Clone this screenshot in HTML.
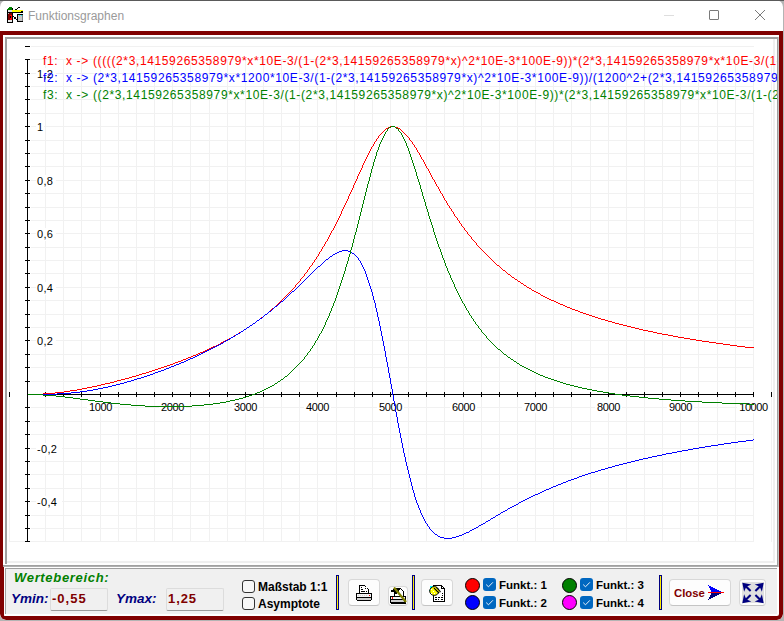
<!DOCTYPE html>
<html><head><meta charset="utf-8">
<style>
*{margin:0;padding:0;box-sizing:border-box}
html,body{width:784px;height:621px;overflow:hidden;background:#b4b4b4;font-family:"Liberation Sans",sans-serif}
.abs{position:absolute}
#win{position:absolute;left:0;top:0;width:783px;height:620px;background:#fff;border-radius:7px 7px 6px 6px;overflow:hidden}
#topline{position:absolute;left:0;top:0;width:784px;height:1px;background:#5a5a5a}
#title{position:absolute;left:28px;top:8px;font-size:12px;line-height:16px;color:#9a9a9a;white-space:pre}
#frame{position:absolute;left:0;top:31px;width:783px;height:589px;border-style:solid;border-color:#800000;border-width:4px 4px 4px 3px;border-radius:0 0 6px 6px}
.g{position:absolute}
.yl{position:absolute;left:36px;height:13px;padding-left:1px;background:#fff;font-size:11px;line-height:13px;color:#000;white-space:pre;letter-spacing:0.3px}
.xl{position:absolute;top:398px;height:15px;padding-top:2px;background:#fff;text-align:center;font-size:11px;line-height:14px;color:#000;letter-spacing:-0.4px;white-space:pre}
.fl{position:absolute;font-size:12px;line-height:16px;white-space:pre;letter-spacing:0.62px}
#clip{position:absolute;left:7px;top:39px;width:770px;height:80px;overflow:hidden}
.pn{position:absolute;white-space:pre}
.cb{position:absolute;width:13px;height:13px;border:1px solid #333;border-radius:3px;background:#f7f7f7}
.cbc{position:absolute;width:13px;height:13px;border-radius:3px;background:#0067c0}
.circ{position:absolute;width:15px;height:15px;border-radius:50%;border:1px solid #000}
.sep{position:absolute;top:575px;width:3px;height:35px;background:#ffee00;border:1px solid #000080}
.btn{position:absolute;background:#fdfdfd;border:1px solid #d8d8d8;border-bottom-color:#c4c4c4;border-radius:4px}
.ed{position:absolute;background:#f0f0f0;border:1px solid #dcdcdc;border-bottom:1px solid #9a9a9a;border-radius:2px}
</style></head><body>
<div id="win">
  <!-- title bar -->
  <svg class="abs" style="left:7px;top:7px" width="16" height="16" viewBox="0 0 16 16" shape-rendering="crispEdges"><rect x="2" y="0" width="3" height="1" fill="#008000"/><rect x="1" y="1" width="4" height="1" fill="#008000"/><rect x="0" y="2" width="5" height="1" fill="#008000"/><rect x="5" y="1" width="1" height="2" fill="#000"/><rect x="0" y="3" width="1" height="2" fill="#000"/><rect x="1" y="3" width="4" height="2" fill="#e0e0e0"/><rect x="5" y="3" width="11" height="2" fill="#ffff00"/><rect x="14" y="4" width="2" height="1" fill="#000"/><rect x="6" y="5" width="10" height="1" fill="#000"/><rect x="8" y="2" width="2" height="1" fill="#000"/><rect x="10" y="1" width="1" height="1" fill="#000"/><rect x="11" y="0" width="2" height="1" fill="#000"/><rect x="0" y="5" width="6" height="11" fill="#000"/><rect x="1" y="6" width="4" height="7" fill="#800000"/><rect x="3" y="8" width="2" height="5" fill="#ff0000"/><rect x="3" y="9" width="1" height="2" fill="#000"/><rect x="1" y="13" width="4" height="2" fill="#e8e8e8"/><rect x="1" y="6" width="1" height="1" fill="#c0c0c0"/><rect x="6" y="9" width="1" height="1" fill="#000"/><rect x="7" y="10" width="2" height="2" fill="#000"/><rect x="9" y="12" width="1" height="1" fill="#000"/><rect x="10" y="7" width="6" height="8" fill="#000"/><rect x="11" y="8" width="4" height="6" fill="#c8c8c8"/><rect x="12" y="8" width="1" height="1" fill="#00ffff"/><rect x="14" y="8" width="1" height="1" fill="#00ffff"/><rect x="15" y="8" width="1" height="6" fill="#808080"/></svg>
  <div id="title">Funktionsgraphen</div>
  <div class="abs" style="left:664px;top:15px;width:10px;height:1px;background:#dedede"></div>
  <div class="abs" style="left:709px;top:10px;width:10px;height:10px;border:1px solid #7a7a7a;border-radius:1px"></div>
  <svg class="abs" style="left:754px;top:9px" width="12" height="12" viewBox="0 0 12 12"><path d="M1 1L11 11M11 1L1 11" stroke="#7a7a7a" stroke-width="1"/></svg>

  <div id="frame"></div>

  <!-- chart panel borders -->
  <div class="abs" style="left:5px;top:37px;width:774px;height:2px;background:#a0a0a0"></div>
  <div class="abs" style="left:5px;top:37px;width:2px;height:527px;background:#a0a0a0"></div>
  <div class="abs" style="left:777px;top:37px;width:1px;height:530px;background:#a0a0a0"></div>
  <div class="abs" style="left:778px;top:37px;width:1px;height:530px;background:#c4c4c4"></div>
  <div class="abs" style="left:3px;top:565px;width:775px;height:1px;background:#a0a0a0"></div>
  <div class="abs" style="left:3px;top:566px;width:775px;height:1px;background:#b0b0b0"></div>
  <div class="abs" style="left:3px;top:567px;width:1px;height:50px;background:#800000"></div>
  <div class="abs" style="left:773px;top:39px;width:2px;height:524px;background:#efefef"></div>
  <div class="abs" style="left:7px;top:561px;width:768px;height:2px;background:#efefef"></div>

  <svg class="chart" width="784" height="621" viewBox="0 0 784 621" shape-rendering="crispEdges" style="position:absolute;left:0;top:0"><path d="M9.5 59V542M27.5 59V542M45.5 59V542M63.5 59V542M81.5 59V542M100.5 59V542M118.5 59V542M136.5 59V542M154.5 59V542M172.5 59V542M190.5 59V542M209.5 59V542M227.5 59V542M245.5 59V542M263.5 59V542M281.5 59V542M299.5 59V542M317.5 59V542M336.5 59V542M354.5 59V542M372.5 59V542M390.5 59V542M408.5 59V542M426.5 59V542M444.5 59V542M463.5 59V542M481.5 59V542M499.5 59V542M517.5 59V542M535.5 59V542M553.5 59V542M571.5 59V542M590.5 59V542M608.5 59V542M626.5 59V542M644.5 59V542M662.5 59V542M680.5 59V542M698.5 59V542M717.5 59V542M735.5 59V542M753.5 59V542M771.5 59V542M9 541.5H754M31 528.5H754M31 515.5H754M31 501.5H754M31 488.5H754M31 474.5H754M31 461.5H754M31 448.5H754M31 434.5H754M31 421.5H754M31 407.5H754M31 394.5H754M31 381.5H754M31 367.5H754M31 354.5H754M31 340.5H754M31 327.5H754M31 314.5H754M31 300.5H754M31 287.5H754M31 273.5H754M31 260.5H754M31 247.5H754M31 233.5H754M31 220.5H754M31 207.5H754M31 193.5H754M31 180.5H754M31 166.5H754M31 153.5H754M31 140.5H754M31 126.5H754M31 113.5H754M31 99.5H754M31 86.5H754M31 73.5H754M31 59.5H754M31 46.5H754" stroke="#f1f1f1" stroke-width="1" fill="none"/><path d="M27.5 59V542M27 394.5H754M25 541.5H30M25 528.5H30M25 515.5H30M25 501.5H30M25 488.5H30M25 474.5H30M25 461.5H30M25 448.5H30M25 434.5H30M25 421.5H30M25 407.5H30M25 381.5H30M25 367.5H30M25 354.5H30M25 340.5H30M25 327.5H30M25 314.5H30M25 300.5H30M25 287.5H30M25 273.5H30M25 260.5H30M25 247.5H30M25 233.5H30M25 220.5H30M25 207.5H30M25 193.5H30M25 180.5H30M25 166.5H30M25 153.5H30M25 140.5H30M25 126.5H30M25 113.5H30M25 99.5H30M25 86.5H30M25 73.5H30M25 59.5H30M25 46.5H30M45.5 392V397M63.5 392V397M81.5 392V397M100.5 392V397M118.5 392V397M136.5 392V397M154.5 392V397M172.5 392V397M190.5 392V397M209.5 392V397M227.5 392V397M245.5 392V397M263.5 392V397M281.5 392V397M299.5 392V397M317.5 392V397M336.5 392V397M354.5 392V397M372.5 392V397M390.5 392V397M408.5 392V397M426.5 392V397M444.5 392V397M463.5 392V397M481.5 392V397M499.5 392V397M517.5 392V397M535.5 392V397M553.5 392V397M571.5 392V397M590.5 392V397M608.5 392V397M626.5 392V397M644.5 392V397M662.5 392V397M680.5 392V397M698.5 392V397M717.5 392V397M735.5 392V397M753.5 392V397M771.5 392V397M9.5 392V397" stroke="#000" stroke-width="1" fill="none"/></svg>
  <div class="yl" style="top:67.5px;width:20px">1,2</div><div class="yl" style="top:120.5px;width:8px">1</div><div class="yl" style="top:174.5px;width:20px">0,8</div><div class="yl" style="top:227.5px;width:20px">0,6</div><div class="yl" style="top:281.5px;width:20px">0,4</div><div class="yl" style="top:334.5px;width:20px">0,2</div><div class="yl" style="top:442.5px;width:26px">-0,2</div><div class="yl" style="top:495.5px;width:26px">-0,4</div>
  <div class="xl" style="left:87.0px;width:27.0px">1000</div><div class="xl" style="left:159.0px;width:27.0px">2000</div><div class="xl" style="left:232.0px;width:27.0px">3000</div><div class="xl" style="left:304.0px;width:27.0px">4000</div><div class="xl" style="left:377.0px;width:27.0px">5000</div><div class="xl" style="left:450.0px;width:27.0px">6000</div><div class="xl" style="left:522.0px;width:27.0px">7000</div><div class="xl" style="left:595.0px;width:27.0px">8000</div><div class="xl" style="left:667.0px;width:27.0px">9000</div><div class="xl" style="left:737.1px;width:32.8px">10000</div>
  <svg width="784" height="621" viewBox="0 0 784 621" shape-rendering="crispEdges" style="position:absolute;left:0;top:0"><path d="M28 394h15v1h-15z" fill="#008000"/><path d="M43 393h1v1h-1zM44 393h1v1h-1zM45 393h1v1h-1zM46 393h1v1h-1zM47 393h1v1h-1zM48 393h1v1h-1zM49 393h1v1h-1zM50 393h1v1h-1zM51 393h1v1h-1zM52 393h1v1h-1zM53 393h1v1h-1zM54 393h1v1h-1zM55 392h1v1h-1zM56 392h1v1h-1zM57 392h1v1h-1zM58 392h1v1h-1zM59 392h1v1h-1zM60 392h1v1h-1zM61 392h1v1h-1zM62 392h1v1h-1zM63 392h1v1h-1zM64 391h1v1h-1zM65 391h1v1h-1zM66 391h1v1h-1zM67 391h1v1h-1zM68 391h1v1h-1zM69 391h1v1h-1zM70 390h1v1h-1zM71 390h1v1h-1zM72 390h1v1h-1zM73 390h1v1h-1zM74 390h1v1h-1zM75 390h1v1h-1zM76 390h1v1h-1zM77 389h1v1h-1zM78 389h1v1h-1zM79 389h1v1h-1zM80 389h1v1h-1zM81 389h1v1h-1zM82 388h1v1h-1zM83 388h1v1h-1zM84 388h1v1h-1zM85 388h1v1h-1zM86 388h1v1h-1zM87 387h1v1h-1zM88 387h1v1h-1zM89 387h1v1h-1zM90 387h1v1h-1zM91 387h1v1h-1zM92 386h1v1h-1zM93 386h1v1h-1zM94 386h1v1h-1zM95 386h1v1h-1zM96 386h1v1h-1zM97 385h1v1h-1zM98 385h1v1h-1zM99 385h1v1h-1zM100 385h1v1h-1zM101 384h1v1h-1zM102 384h1v1h-1zM103 384h1v1h-1zM104 384h1v1h-1zM105 383h1v1h-1zM106 383h1v1h-1zM107 383h1v1h-1zM108 383h1v1h-1zM109 383h1v1h-1zM110 382h1v1h-1zM111 382h1v1h-1zM112 382h1v1h-1zM113 382h1v1h-1zM114 381h1v1h-1zM115 381h1v1h-1zM116 381h1v1h-1zM117 380h1v1h-1zM118 380h1v1h-1zM119 380h1v1h-1zM120 380h1v1h-1zM121 379h1v1h-1zM122 379h1v1h-1zM123 379h1v1h-1zM124 379h1v1h-1zM125 378h1v1h-1zM126 378h1v1h-1zM127 378h1v1h-1zM128 378h1v1h-1zM129 377h1v1h-1zM130 377h1v1h-1zM131 377h1v1h-1zM132 376h1v1h-1zM133 376h1v1h-1zM134 376h1v1h-1zM135 376h1v1h-1zM136 375h1v1h-1zM137 375h1v1h-1zM138 375h1v1h-1zM139 374h1v1h-1zM140 374h1v1h-1zM141 374h1v1h-1zM142 373h1v1h-1zM143 373h1v1h-1zM144 373h1v1h-1zM145 373h1v1h-1zM146 372h1v1h-1zM147 372h1v1h-1zM148 372h1v1h-1zM149 371h1v1h-1zM150 371h1v1h-1zM151 371h1v1h-1zM152 370h1v1h-1zM153 370h1v1h-1zM154 370h1v1h-1zM155 369h1v1h-1zM156 369h1v1h-1zM157 369h1v1h-1zM158 368h1v1h-1zM159 368h1v1h-1zM160 368h1v1h-1zM161 367h1v1h-1zM162 367h1v1h-1zM163 367h1v1h-1zM164 366h1v1h-1zM165 366h1v1h-1zM166 366h1v1h-1zM167 365h1v1h-1zM168 365h1v1h-1zM169 365h1v1h-1zM170 364h1v1h-1zM171 364h1v1h-1zM172 364h1v1h-1zM173 363h1v1h-1zM174 363h1v1h-1zM175 362h1v1h-1zM176 362h1v1h-1zM177 362h1v1h-1zM178 361h1v1h-1zM179 361h1v1h-1zM180 361h1v1h-1zM181 360h1v1h-1zM182 360h1v1h-1zM183 359h1v1h-1zM184 359h1v1h-1zM185 359h1v1h-1zM186 358h1v1h-1zM187 358h1v1h-1zM188 357h1v1h-1zM189 357h1v1h-1zM190 357h1v1h-1zM191 356h1v1h-1zM192 356h1v1h-1zM193 355h1v1h-1zM194 355h1v1h-1zM195 355h1v1h-1zM196 354h1v1h-1zM197 354h1v1h-1zM198 353h1v1h-1zM199 353h1v1h-1zM200 352h1v1h-1zM201 352h1v1h-1zM202 352h1v1h-1zM203 351h1v1h-1zM204 351h1v1h-1zM205 350h1v1h-1zM206 350h1v1h-1zM207 349h1v1h-1zM208 349h1v1h-1zM209 348h1v1h-1zM210 348h1v1h-1zM211 347h1v1h-1zM212 347h1v1h-1zM213 346h1v1h-1zM214 346h1v1h-1zM215 346h1v1h-1zM216 345h1v1h-1zM217 345h1v1h-1zM218 344h1v1h-1zM219 344h1v1h-1zM220 343h1v1h-1zM221 342h1v1h-1zM222 342h1v1h-1zM223 341h1v1h-1zM224 341h1v1h-1zM225 340h1v1h-1zM226 340h1v1h-1zM227 339h1v1h-1zM228 339h1v1h-1zM229 338h1v1h-1zM230 338h1v1h-1zM231 337h1v1h-1zM232 337h1v1h-1zM233 336h1v1h-1zM234 335h1v1h-1zM235 335h1v1h-1zM236 334h1v1h-1zM237 334h1v1h-1zM238 333h1v1h-1zM239 332h1v1h-1zM240 332h1v1h-1zM241 331h1v1h-1zM242 331h1v1h-1zM243 330h1v1h-1zM244 329h1v1h-1zM245 329h1v1h-1zM246 328h1v1h-1zM247 327h1v1h-1zM248 327h1v1h-1zM249 326h1v1h-1zM250 325h1v1h-1zM251 325h1v1h-1zM252 324h1v1h-1zM253 323h1v1h-1zM254 323h1v1h-1zM255 322h1v1h-1zM256 321h1v1h-1zM257 320h1v1h-1zM258 320h1v1h-1zM259 319h1v1h-1zM260 318h1v1h-1zM261 317h1v1h-1zM262 317h1v1h-1zM263 316h1v1h-1zM264 315h1v1h-1zM265 314h1v1h-1zM266 314h1v1h-1zM267 313h1v1h-1zM268 312h1v1h-1zM269 311h1v1h-1zM270 310h1v1h-1zM271 309h1v1h-1zM272 308h1v1h-1zM273 308h1v1h-1zM274 307h1v1h-1zM275 306h1v1h-1zM276 305h1v1h-1zM277 304h1v1h-1zM278 303h1v1h-1zM279 302h1v1h-1zM280 301h1v1h-1zM281 300h1v1h-1zM282 299h1v1h-1zM283 298h1v1h-1zM284 297h1v1h-1zM285 296h1v1h-1zM286 295h1v1h-1zM287 294h1v1h-1zM288 293h1v1h-1zM289 292h1v1h-1zM290 291h1v1h-1zM291 290h1v1h-1zM292 289h1v1h-1zM293 288h1v1h-1zM294 287h1v1h-1zM295 285h1v2h-1zM296 284h1v1h-1zM297 283h1v1h-1zM298 282h1v1h-1zM299 281h1v1h-1zM300 279h1v2h-1zM301 278h1v1h-1zM302 277h1v1h-1zM303 276h1v1h-1zM304 274h1v2h-1zM305 273h1v1h-1zM306 272h1v1h-1zM307 270h1v2h-1zM308 269h1v1h-1zM309 267h1v2h-1zM310 266h1v1h-1zM311 265h1v1h-1zM312 263h1v2h-1zM313 262h1v1h-1zM314 260h1v2h-1zM315 259h1v1h-1zM316 257h1v2h-1zM317 256h1v1h-1zM318 254h1v2h-1zM319 252h1v2h-1zM320 251h1v1h-1zM321 249h1v2h-1zM322 247h1v2h-1zM323 246h1v1h-1zM324 244h1v2h-1zM325 242h1v2h-1zM326 241h1v1h-1zM327 239h1v2h-1zM328 237h1v2h-1zM329 235h1v2h-1zM330 233h1v2h-1zM331 231h1v2h-1zM332 230h1v1h-1zM333 228h1v2h-1zM334 226h1v2h-1zM335 224h1v2h-1zM336 222h1v2h-1zM337 220h1v2h-1zM338 218h1v2h-1zM339 216h1v2h-1zM340 214h1v2h-1zM341 211h1v3h-1zM342 209h1v2h-1zM343 207h1v2h-1zM344 205h1v2h-1zM345 203h1v2h-1zM346 201h1v2h-1zM347 199h1v2h-1zM348 196h1v3h-1zM349 194h1v2h-1zM350 192h1v2h-1zM351 190h1v2h-1zM352 188h1v2h-1zM353 185h1v3h-1zM354 183h1v2h-1zM355 181h1v2h-1zM356 179h1v2h-1zM357 176h1v3h-1zM358 174h1v2h-1zM359 172h1v2h-1zM360 170h1v2h-1zM361 168h1v2h-1zM362 165h1v3h-1zM363 163h1v2h-1zM364 161h1v2h-1zM365 159h1v2h-1zM366 157h1v2h-1zM367 155h1v2h-1zM368 153h1v2h-1zM369 151h1v2h-1zM370 149h1v2h-1zM371 147h1v2h-1zM372 146h1v1h-1zM373 144h1v2h-1zM374 142h1v2h-1zM375 141h1v1h-1zM376 139h1v2h-1zM377 138h1v1h-1zM378 136h1v2h-1zM379 135h1v1h-1zM380 134h1v1h-1zM381 133h1v1h-1zM382 132h1v1h-1zM383 131h1v1h-1zM384 130h1v1h-1zM385 129h1v1h-1zM386 128h1v1h-1zM387 128h1v1h-1zM388 127h1v1h-1zM389 127h1v1h-1zM390 126h1v1h-1zM391 126h1v1h-1zM392 126h1v1h-1zM393 126h1v1h-1zM394 126h1v1h-1zM395 127h1v1h-1zM396 127h1v1h-1zM397 127h1v1h-1zM398 128h1v1h-1zM399 128h1v1h-1zM400 129h1v1h-1zM401 130h1v1h-1zM402 131h1v1h-1zM403 132h1v1h-1zM404 133h1v1h-1zM405 134h1v1h-1zM406 135h1v1h-1zM407 136h1v1h-1zM408 137h1v1h-1zM409 138h1v2h-1zM410 140h1v1h-1zM411 141h1v1h-1zM412 142h1v2h-1zM413 144h1v1h-1zM414 145h1v2h-1zM415 147h1v1h-1zM416 148h1v2h-1zM417 150h1v2h-1zM418 152h1v1h-1zM419 153h1v2h-1zM420 155h1v2h-1zM421 157h1v2h-1zM422 159h1v1h-1zM423 160h1v2h-1zM424 162h1v2h-1zM425 164h1v2h-1zM426 166h1v2h-1zM427 168h1v1h-1zM428 169h1v2h-1zM429 171h1v2h-1zM430 173h1v2h-1zM431 175h1v2h-1zM432 177h1v2h-1zM433 179h1v1h-1zM434 180h1v2h-1zM435 182h1v2h-1zM436 184h1v2h-1zM437 186h1v1h-1zM438 187h1v2h-1zM439 189h1v2h-1zM440 191h1v2h-1zM441 193h1v1h-1zM442 194h1v2h-1zM443 196h1v2h-1zM444 198h1v2h-1zM445 200h1v1h-1zM446 201h1v2h-1zM447 203h1v2h-1zM448 205h1v1h-1zM449 206h1v2h-1zM450 208h1v1h-1zM451 209h1v2h-1zM452 211h1v1h-1zM453 212h1v2h-1zM454 214h1v2h-1zM455 216h1v1h-1zM456 217h1v1h-1zM457 218h1v2h-1zM458 220h1v1h-1zM459 221h1v2h-1zM460 223h1v1h-1zM461 224h1v2h-1zM462 226h1v1h-1zM463 227h1v1h-1zM464 228h1v2h-1zM465 230h1v1h-1zM466 231h1v1h-1zM467 232h1v2h-1zM468 234h1v1h-1zM469 235h1v1h-1zM470 236h1v1h-1zM471 237h1v2h-1zM472 239h1v1h-1zM473 240h1v1h-1zM474 241h1v1h-1zM475 242h1v1h-1zM476 243h1v2h-1zM477 245h1v1h-1zM478 246h1v1h-1zM479 247h1v1h-1zM480 248h1v1h-1zM481 249h1v1h-1zM482 250h1v1h-1zM483 251h1v1h-1zM484 252h1v1h-1zM485 253h1v1h-1zM486 254h1v1h-1zM487 255h1v1h-1zM488 256h1v1h-1zM489 257h1v1h-1zM490 258h1v1h-1zM491 259h1v1h-1zM492 260h1v1h-1zM493 261h1v1h-1zM494 262h1v1h-1zM495 263h1v1h-1zM496 264h1v1h-1zM497 265h1v1h-1zM498 265h1v1h-1zM499 266h1v1h-1zM500 267h1v1h-1zM501 268h1v1h-1zM502 269h1v1h-1zM503 270h1v1h-1zM504 270h1v1h-1zM505 271h1v1h-1zM506 272h1v1h-1zM507 273h1v1h-1zM508 274h1v1h-1zM509 274h1v1h-1zM510 275h1v1h-1zM511 276h1v1h-1zM512 277h1v1h-1zM513 277h1v1h-1zM514 278h1v1h-1zM515 279h1v1h-1zM516 279h1v1h-1zM517 280h1v1h-1zM518 281h1v1h-1zM519 281h1v1h-1zM520 282h1v1h-1zM521 283h1v1h-1zM522 283h1v1h-1zM523 284h1v1h-1zM524 285h1v1h-1zM525 285h1v1h-1zM526 286h1v1h-1zM527 287h1v1h-1zM528 287h1v1h-1zM529 288h1v1h-1zM530 288h1v1h-1zM531 289h1v1h-1zM532 290h1v1h-1zM533 290h1v1h-1zM534 291h1v1h-1zM535 291h1v1h-1zM536 292h1v1h-1zM537 292h1v1h-1zM538 293h1v1h-1zM539 293h1v1h-1zM540 294h1v1h-1zM541 295h1v1h-1zM542 295h1v1h-1zM543 296h1v1h-1zM544 296h1v1h-1zM545 297h1v1h-1zM546 297h1v1h-1zM547 298h1v1h-1zM548 298h1v1h-1zM549 299h1v1h-1zM550 299h1v1h-1zM551 300h1v1h-1zM552 300h1v1h-1zM553 300h1v1h-1zM554 301h1v1h-1zM555 301h1v1h-1zM556 302h1v1h-1zM557 302h1v1h-1zM558 303h1v1h-1zM559 303h1v1h-1zM560 304h1v1h-1zM561 304h1v1h-1zM562 304h1v1h-1zM563 305h1v1h-1zM564 305h1v1h-1zM565 306h1v1h-1zM566 306h1v1h-1zM567 307h1v1h-1zM568 307h1v1h-1zM569 307h1v1h-1zM570 308h1v1h-1zM571 308h1v1h-1zM572 309h1v1h-1zM573 309h1v1h-1zM574 309h1v1h-1zM575 310h1v1h-1zM576 310h1v1h-1zM577 310h1v1h-1zM578 311h1v1h-1zM579 311h1v1h-1zM580 312h1v1h-1zM581 312h1v1h-1zM582 312h1v1h-1zM583 313h1v1h-1zM584 313h1v1h-1zM585 313h1v1h-1zM586 314h1v1h-1zM587 314h1v1h-1zM588 314h1v1h-1zM589 315h1v1h-1zM590 315h1v1h-1zM591 315h1v1h-1zM592 316h1v1h-1zM593 316h1v1h-1zM594 316h1v1h-1zM595 317h1v1h-1zM596 317h1v1h-1zM597 317h1v1h-1zM598 318h1v1h-1zM599 318h1v1h-1zM600 318h1v1h-1zM601 319h1v1h-1zM602 319h1v1h-1zM603 319h1v1h-1zM604 319h1v1h-1zM605 320h1v1h-1zM606 320h1v1h-1zM607 320h1v1h-1zM608 321h1v1h-1zM609 321h1v1h-1zM610 321h1v1h-1zM611 321h1v1h-1zM612 322h1v1h-1zM613 322h1v1h-1zM614 322h1v1h-1zM615 323h1v1h-1zM616 323h1v1h-1zM617 323h1v1h-1zM618 323h1v1h-1zM619 324h1v1h-1zM620 324h1v1h-1zM621 324h1v1h-1zM622 324h1v1h-1zM623 325h1v1h-1zM624 325h1v1h-1zM625 325h1v1h-1zM626 325h1v1h-1zM627 326h1v1h-1zM628 326h1v1h-1zM629 326h1v1h-1zM630 326h1v1h-1zM631 327h1v1h-1zM632 327h1v1h-1zM633 327h1v1h-1zM634 327h1v1h-1zM635 328h1v1h-1zM636 328h1v1h-1zM637 328h1v1h-1zM638 328h1v1h-1zM639 329h1v1h-1zM640 329h1v1h-1zM641 329h1v1h-1zM642 329h1v1h-1zM643 330h1v1h-1zM644 330h1v1h-1zM645 330h1v1h-1zM646 330h1v1h-1zM647 330h1v1h-1zM648 331h1v1h-1zM649 331h1v1h-1zM650 331h1v1h-1zM651 331h1v1h-1zM652 331h1v1h-1zM653 332h1v1h-1zM654 332h1v1h-1zM655 332h1v1h-1zM656 332h1v1h-1zM657 333h1v1h-1zM658 333h1v1h-1zM659 333h1v1h-1zM660 333h1v1h-1zM661 333h1v1h-1zM662 334h1v1h-1zM663 334h1v1h-1zM664 334h1v1h-1zM665 334h1v1h-1zM666 334h1v1h-1zM667 334h1v1h-1zM668 335h1v1h-1zM669 335h1v1h-1zM670 335h1v1h-1zM671 335h1v1h-1zM672 335h1v1h-1zM673 336h1v1h-1zM674 336h1v1h-1zM675 336h1v1h-1zM676 336h1v1h-1zM677 336h1v1h-1zM678 337h1v1h-1zM679 337h1v1h-1zM680 337h1v1h-1zM681 337h1v1h-1zM682 337h1v1h-1zM683 337h1v1h-1zM684 338h1v1h-1zM685 338h1v1h-1zM686 338h1v1h-1zM687 338h1v1h-1zM688 338h1v1h-1zM689 338h1v1h-1zM690 339h1v1h-1zM691 339h1v1h-1zM692 339h1v1h-1zM693 339h1v1h-1zM694 339h1v1h-1zM695 339h1v1h-1zM696 340h1v1h-1zM697 340h1v1h-1zM698 340h1v1h-1zM699 340h1v1h-1zM700 340h1v1h-1zM701 340h1v1h-1zM702 341h1v1h-1zM703 341h1v1h-1zM704 341h1v1h-1zM705 341h1v1h-1zM706 341h1v1h-1zM707 341h1v1h-1zM708 341h1v1h-1zM709 342h1v1h-1zM710 342h1v1h-1zM711 342h1v1h-1zM712 342h1v1h-1zM713 342h1v1h-1zM714 342h1v1h-1zM715 342h1v1h-1zM716 343h1v1h-1zM717 343h1v1h-1zM718 343h1v1h-1zM719 343h1v1h-1zM720 343h1v1h-1zM721 343h1v1h-1zM722 343h1v1h-1zM723 344h1v1h-1zM724 344h1v1h-1zM725 344h1v1h-1zM726 344h1v1h-1zM727 344h1v1h-1zM728 344h1v1h-1zM729 344h1v1h-1zM730 345h1v1h-1zM731 345h1v1h-1zM732 345h1v1h-1zM733 345h1v1h-1zM734 345h1v1h-1zM735 345h1v1h-1zM736 345h1v1h-1zM737 346h1v1h-1zM738 346h1v1h-1zM739 346h1v1h-1zM740 346h1v1h-1zM741 346h1v1h-1zM742 346h1v1h-1zM743 346h1v1h-1zM744 346h1v1h-1zM745 347h1v1h-1zM746 347h1v1h-1zM747 347h1v1h-1zM748 347h1v1h-1zM749 347h1v1h-1zM750 347h1v1h-1zM751 347h1v1h-1zM752 347h1v1h-1zM753 347h1v1h-1z" fill="#ff0000"/><path d="M43 394h1v1h-1zM44 394h1v1h-1zM45 394h1v1h-1zM46 394h1v1h-1zM47 394h1v1h-1zM48 394h1v1h-1zM49 394h1v1h-1zM50 394h1v1h-1zM51 394h1v1h-1zM52 394h1v1h-1zM53 394h1v1h-1zM54 394h1v1h-1zM55 394h1v1h-1zM56 394h1v1h-1zM57 393h1v1h-1zM58 393h1v1h-1zM59 393h1v1h-1zM60 393h1v1h-1zM61 393h1v1h-1zM62 393h1v1h-1zM63 393h1v1h-1zM64 393h1v1h-1zM65 393h1v1h-1zM66 393h1v1h-1zM67 393h1v1h-1zM68 393h1v1h-1zM69 393h1v1h-1zM70 393h1v1h-1zM71 392h1v1h-1zM72 392h1v1h-1zM73 392h1v1h-1zM74 392h1v1h-1zM75 392h1v1h-1zM76 392h1v1h-1zM77 392h1v1h-1zM78 392h1v1h-1zM79 392h1v1h-1zM80 391h1v1h-1zM81 391h1v1h-1zM82 391h1v1h-1zM83 391h1v1h-1zM84 391h1v1h-1zM85 391h1v1h-1zM86 391h1v1h-1zM87 390h1v1h-1zM88 390h1v1h-1zM89 390h1v1h-1zM90 390h1v1h-1zM91 390h1v1h-1zM92 390h1v1h-1zM93 389h1v1h-1zM94 389h1v1h-1zM95 389h1v1h-1zM96 389h1v1h-1zM97 389h1v1h-1zM98 388h1v1h-1zM99 388h1v1h-1zM100 388h1v1h-1zM101 388h1v1h-1zM102 388h1v1h-1zM103 387h1v1h-1zM104 387h1v1h-1zM105 387h1v1h-1zM106 387h1v1h-1zM107 387h1v1h-1zM108 386h1v1h-1zM109 386h1v1h-1zM110 386h1v1h-1zM111 386h1v1h-1zM112 385h1v1h-1zM113 385h1v1h-1zM114 385h1v1h-1zM115 385h1v1h-1zM116 384h1v1h-1zM117 384h1v1h-1zM118 384h1v1h-1zM119 384h1v1h-1zM120 383h1v1h-1zM121 383h1v1h-1zM122 383h1v1h-1zM123 383h1v1h-1zM124 382h1v1h-1zM125 382h1v1h-1zM126 382h1v1h-1zM127 381h1v1h-1zM128 381h1v1h-1zM129 381h1v1h-1zM130 381h1v1h-1zM131 380h1v1h-1zM132 380h1v1h-1zM133 380h1v1h-1zM134 379h1v1h-1zM135 379h1v1h-1zM136 379h1v1h-1zM137 378h1v1h-1zM138 378h1v1h-1zM139 378h1v1h-1zM140 378h1v1h-1zM141 377h1v1h-1zM142 377h1v1h-1zM143 377h1v1h-1zM144 376h1v1h-1zM145 376h1v1h-1zM146 376h1v1h-1zM147 375h1v1h-1zM148 375h1v1h-1zM149 375h1v1h-1zM150 374h1v1h-1zM151 374h1v1h-1zM152 374h1v1h-1zM153 373h1v1h-1zM154 373h1v1h-1zM155 372h1v1h-1zM156 372h1v1h-1zM157 372h1v1h-1zM158 371h1v1h-1zM159 371h1v1h-1zM160 371h1v1h-1zM161 370h1v1h-1zM162 370h1v1h-1zM163 370h1v1h-1zM164 369h1v1h-1zM165 369h1v1h-1zM166 368h1v1h-1zM167 368h1v1h-1zM168 368h1v1h-1zM169 367h1v1h-1zM170 367h1v1h-1zM171 366h1v1h-1zM172 366h1v1h-1zM173 366h1v1h-1zM174 365h1v1h-1zM175 365h1v1h-1zM176 364h1v1h-1zM177 364h1v1h-1zM178 364h1v1h-1zM179 363h1v1h-1zM180 363h1v1h-1zM181 362h1v1h-1zM182 362h1v1h-1zM183 362h1v1h-1zM184 361h1v1h-1zM185 361h1v1h-1zM186 360h1v1h-1zM187 360h1v1h-1zM188 359h1v1h-1zM189 359h1v1h-1zM190 358h1v1h-1zM191 358h1v1h-1zM192 358h1v1h-1zM193 357h1v1h-1zM194 357h1v1h-1zM195 356h1v1h-1zM196 356h1v1h-1zM197 355h1v1h-1zM198 355h1v1h-1zM199 354h1v1h-1zM200 354h1v1h-1zM201 353h1v1h-1zM202 353h1v1h-1zM203 352h1v1h-1zM204 352h1v1h-1zM205 351h1v1h-1zM206 351h1v1h-1zM207 350h1v1h-1zM208 350h1v1h-1zM209 349h1v1h-1zM210 349h1v1h-1zM211 348h1v1h-1zM212 348h1v1h-1zM213 347h1v1h-1zM214 347h1v1h-1zM215 346h1v1h-1zM216 346h1v1h-1zM217 345h1v1h-1zM218 345h1v1h-1zM219 344h1v1h-1zM220 344h1v1h-1zM221 343h1v1h-1zM222 343h1v1h-1zM223 342h1v1h-1zM224 341h1v1h-1zM225 341h1v1h-1zM226 340h1v1h-1zM227 340h1v1h-1zM228 339h1v1h-1zM229 339h1v1h-1zM230 338h1v1h-1zM231 337h1v1h-1zM232 337h1v1h-1zM233 336h1v1h-1zM234 336h1v1h-1zM235 335h1v1h-1zM236 334h1v1h-1zM237 334h1v1h-1zM238 333h1v1h-1zM239 333h1v1h-1zM240 332h1v1h-1zM241 331h1v1h-1zM242 331h1v1h-1zM243 330h1v1h-1zM244 329h1v1h-1zM245 329h1v1h-1zM246 328h1v1h-1zM247 327h1v1h-1zM248 327h1v1h-1zM249 326h1v1h-1zM250 325h1v1h-1zM251 325h1v1h-1zM252 324h1v1h-1zM253 323h1v1h-1zM254 323h1v1h-1zM255 322h1v1h-1zM256 321h1v1h-1zM257 320h1v1h-1zM258 320h1v1h-1zM259 319h1v1h-1zM260 318h1v1h-1zM261 318h1v1h-1zM262 317h1v1h-1zM263 316h1v1h-1zM264 315h1v1h-1zM265 314h1v1h-1zM266 314h1v1h-1zM267 313h1v1h-1zM268 312h1v1h-1zM269 311h1v1h-1zM270 311h1v1h-1zM271 310h1v1h-1zM272 309h1v1h-1zM273 308h1v1h-1zM274 307h1v1h-1zM275 306h1v1h-1zM276 306h1v1h-1zM277 305h1v1h-1zM278 304h1v1h-1zM279 303h1v1h-1zM280 302h1v1h-1zM281 301h1v1h-1zM282 301h1v1h-1zM283 300h1v1h-1zM284 299h1v1h-1zM285 298h1v1h-1zM286 297h1v1h-1zM287 296h1v1h-1zM288 295h1v1h-1zM289 294h1v1h-1zM290 293h1v1h-1zM291 292h1v1h-1zM292 291h1v1h-1zM293 291h1v1h-1zM294 290h1v1h-1zM295 289h1v1h-1zM296 288h1v1h-1zM297 287h1v1h-1zM298 286h1v1h-1zM299 285h1v1h-1zM300 284h1v1h-1zM301 283h1v1h-1zM302 282h1v1h-1zM303 281h1v1h-1zM304 280h1v1h-1zM305 279h1v1h-1zM306 278h1v1h-1zM307 277h1v1h-1zM308 276h1v1h-1zM309 275h1v1h-1zM310 274h1v1h-1zM311 273h1v1h-1zM312 272h1v1h-1zM313 271h1v1h-1zM314 270h1v1h-1zM315 269h1v1h-1zM316 268h1v1h-1zM317 267h1v1h-1zM318 266h1v1h-1zM319 266h1v1h-1zM320 265h1v1h-1zM321 264h1v1h-1zM322 263h1v1h-1zM323 262h1v1h-1zM324 261h1v1h-1zM325 260h1v1h-1zM326 259h1v1h-1zM327 259h1v1h-1zM328 258h1v1h-1zM329 257h1v1h-1zM330 256h1v1h-1zM331 256h1v1h-1zM332 255h1v1h-1zM333 254h1v1h-1zM334 254h1v1h-1zM335 253h1v1h-1zM336 253h1v1h-1zM337 252h1v1h-1zM338 252h1v1h-1zM339 251h1v1h-1zM340 251h1v1h-1zM341 251h1v1h-1zM342 250h1v1h-1zM343 250h1v1h-1zM344 250h1v1h-1zM345 250h1v1h-1zM346 250h1v1h-1zM347 250h1v1h-1zM348 251h1v1h-1zM349 251h1v1h-1zM350 251h1v1h-1zM351 252h1v1h-1zM352 253h1v1h-1zM353 253h1v1h-1zM354 254h1v1h-1zM355 255h1v1h-1zM356 256h1v1h-1zM357 257h1v1h-1zM358 258h1v2h-1zM359 260h1v1h-1zM360 261h1v2h-1zM361 263h1v2h-1zM362 265h1v2h-1zM363 267h1v2h-1zM364 269h1v2h-1zM365 271h1v3h-1zM366 274h1v3h-1zM367 277h1v3h-1zM368 280h1v3h-1zM369 283h1v3h-1zM370 286h1v3h-1zM371 289h1v3h-1zM372 292h1v4h-1zM373 296h1v4h-1zM374 300h1v3h-1zM375 303h1v5h-1zM376 308h1v4h-1zM377 312h1v5h-1zM378 317h1v4h-1zM379 321h1v5h-1zM380 326h1v5h-1zM381 331h1v5h-1zM382 336h1v5h-1zM383 341h1v5h-1zM384 346h1v5h-1zM385 351h1v6h-1zM386 357h1v5h-1zM387 362h1v5h-1zM388 367h1v6h-1zM389 373h1v5h-1zM390 378h1v6h-1zM391 384h1v5h-1zM392 389h1v6h-1zM393 395h1v6h-1zM394 401h1v5h-1zM395 406h1v6h-1zM396 412h1v5h-1zM397 417h1v6h-1zM398 423h1v5h-1zM399 428h1v5h-1zM400 433h1v5h-1zM401 438h1v5h-1zM402 443h1v5h-1zM403 448h1v5h-1zM404 453h1v4h-1zM405 457h1v5h-1zM406 462h1v4h-1zM407 466h1v4h-1zM408 470h1v4h-1zM409 474h1v4h-1zM410 478h1v4h-1zM411 482h1v4h-1zM412 486h1v4h-1zM413 490h1v3h-1zM414 493h1v4h-1zM415 497h1v3h-1zM416 500h1v3h-1zM417 503h1v2h-1zM418 505h1v3h-1zM419 508h1v2h-1zM420 510h1v3h-1zM421 513h1v2h-1zM422 515h1v2h-1zM423 517h1v2h-1zM424 519h1v2h-1zM425 521h1v2h-1zM426 523h1v1h-1zM427 524h1v2h-1zM428 526h1v1h-1zM429 527h1v2h-1zM430 529h1v1h-1zM431 530h1v1h-1zM432 531h1v1h-1zM433 532h1v1h-1zM434 533h1v1h-1zM435 534h1v1h-1zM436 534h1v1h-1zM437 535h1v1h-1zM438 536h1v1h-1zM439 536h1v1h-1zM440 537h1v1h-1zM441 537h1v1h-1zM442 537h1v1h-1zM443 537h1v1h-1zM444 538h1v1h-1zM445 538h1v1h-1zM446 538h1v1h-1zM447 538h1v1h-1zM448 538h1v1h-1zM449 538h1v1h-1zM450 538h1v1h-1zM451 538h1v1h-1zM452 537h1v1h-1zM453 537h1v1h-1zM454 537h1v1h-1zM455 537h1v1h-1zM456 536h1v1h-1zM457 536h1v1h-1zM458 536h1v1h-1zM459 535h1v1h-1zM460 535h1v1h-1zM461 535h1v1h-1zM462 534h1v1h-1zM463 534h1v1h-1zM464 533h1v1h-1zM465 533h1v1h-1zM466 532h1v1h-1zM467 532h1v1h-1zM468 532h1v1h-1zM469 531h1v1h-1zM470 530h1v1h-1zM471 530h1v1h-1zM472 529h1v1h-1zM473 529h1v1h-1zM474 528h1v1h-1zM475 528h1v1h-1zM476 527h1v1h-1zM477 527h1v1h-1zM478 526h1v1h-1zM479 525h1v1h-1zM480 525h1v1h-1zM481 524h1v1h-1zM482 524h1v1h-1zM483 523h1v1h-1zM484 523h1v1h-1zM485 522h1v1h-1zM486 521h1v1h-1zM487 521h1v1h-1zM488 520h1v1h-1zM489 520h1v1h-1zM490 519h1v1h-1zM491 518h1v1h-1zM492 518h1v1h-1zM493 517h1v1h-1zM494 517h1v1h-1zM495 516h1v1h-1zM496 515h1v1h-1zM497 515h1v1h-1zM498 514h1v1h-1zM499 514h1v1h-1zM500 513h1v1h-1zM501 512h1v1h-1zM502 512h1v1h-1zM503 511h1v1h-1zM504 511h1v1h-1zM505 510h1v1h-1zM506 510h1v1h-1zM507 509h1v1h-1zM508 508h1v1h-1zM509 508h1v1h-1zM510 507h1v1h-1zM511 507h1v1h-1zM512 506h1v1h-1zM513 506h1v1h-1zM514 505h1v1h-1zM515 505h1v1h-1zM516 504h1v1h-1zM517 504h1v1h-1zM518 503h1v1h-1zM519 502h1v1h-1zM520 502h1v1h-1zM521 501h1v1h-1zM522 501h1v1h-1zM523 500h1v1h-1zM524 500h1v1h-1zM525 499h1v1h-1zM526 499h1v1h-1zM527 498h1v1h-1zM528 498h1v1h-1zM529 497h1v1h-1zM530 497h1v1h-1zM531 496h1v1h-1zM532 496h1v1h-1zM533 495h1v1h-1zM534 495h1v1h-1zM535 494h1v1h-1zM536 494h1v1h-1zM537 494h1v1h-1zM538 493h1v1h-1zM539 493h1v1h-1zM540 492h1v1h-1zM541 492h1v1h-1zM542 491h1v1h-1zM543 491h1v1h-1zM544 490h1v1h-1zM545 490h1v1h-1zM546 489h1v1h-1zM547 489h1v1h-1zM548 489h1v1h-1zM549 488h1v1h-1zM550 488h1v1h-1zM551 487h1v1h-1zM552 487h1v1h-1zM553 486h1v1h-1zM554 486h1v1h-1zM555 486h1v1h-1zM556 485h1v1h-1zM557 485h1v1h-1zM558 484h1v1h-1zM559 484h1v1h-1zM560 484h1v1h-1zM561 483h1v1h-1zM562 483h1v1h-1zM563 482h1v1h-1zM564 482h1v1h-1zM565 482h1v1h-1zM566 481h1v1h-1zM567 481h1v1h-1zM568 480h1v1h-1zM569 480h1v1h-1zM570 480h1v1h-1zM571 479h1v1h-1zM572 479h1v1h-1zM573 479h1v1h-1zM574 478h1v1h-1zM575 478h1v1h-1zM576 478h1v1h-1zM577 477h1v1h-1zM578 477h1v1h-1zM579 476h1v1h-1zM580 476h1v1h-1zM581 476h1v1h-1zM582 475h1v1h-1zM583 475h1v1h-1zM584 475h1v1h-1zM585 474h1v1h-1zM586 474h1v1h-1zM587 474h1v1h-1zM588 473h1v1h-1zM589 473h1v1h-1zM590 473h1v1h-1zM591 472h1v1h-1zM592 472h1v1h-1zM593 472h1v1h-1zM594 472h1v1h-1zM595 471h1v1h-1zM596 471h1v1h-1zM597 471h1v1h-1zM598 470h1v1h-1zM599 470h1v1h-1zM600 470h1v1h-1zM601 469h1v1h-1zM602 469h1v1h-1zM603 469h1v1h-1zM604 469h1v1h-1zM605 468h1v1h-1zM606 468h1v1h-1zM607 468h1v1h-1zM608 467h1v1h-1zM609 467h1v1h-1zM610 467h1v1h-1zM611 467h1v1h-1zM612 466h1v1h-1zM613 466h1v1h-1zM614 466h1v1h-1zM615 465h1v1h-1zM616 465h1v1h-1zM617 465h1v1h-1zM618 465h1v1h-1zM619 464h1v1h-1zM620 464h1v1h-1zM621 464h1v1h-1zM622 464h1v1h-1zM623 463h1v1h-1zM624 463h1v1h-1zM625 463h1v1h-1zM626 463h1v1h-1zM627 462h1v1h-1zM628 462h1v1h-1zM629 462h1v1h-1zM630 462h1v1h-1zM631 461h1v1h-1zM632 461h1v1h-1zM633 461h1v1h-1zM634 461h1v1h-1zM635 460h1v1h-1zM636 460h1v1h-1zM637 460h1v1h-1zM638 460h1v1h-1zM639 459h1v1h-1zM640 459h1v1h-1zM641 459h1v1h-1zM642 459h1v1h-1zM643 458h1v1h-1zM644 458h1v1h-1zM645 458h1v1h-1zM646 458h1v1h-1zM647 458h1v1h-1zM648 457h1v1h-1zM649 457h1v1h-1zM650 457h1v1h-1zM651 457h1v1h-1zM652 456h1v1h-1zM653 456h1v1h-1zM654 456h1v1h-1zM655 456h1v1h-1zM656 456h1v1h-1zM657 455h1v1h-1zM658 455h1v1h-1zM659 455h1v1h-1zM660 455h1v1h-1zM661 455h1v1h-1zM662 454h1v1h-1zM663 454h1v1h-1zM664 454h1v1h-1zM665 454h1v1h-1zM666 453h1v1h-1zM667 453h1v1h-1zM668 453h1v1h-1zM669 453h1v1h-1zM670 453h1v1h-1zM671 453h1v1h-1zM672 452h1v1h-1zM673 452h1v1h-1zM674 452h1v1h-1zM675 452h1v1h-1zM676 452h1v1h-1zM677 451h1v1h-1zM678 451h1v1h-1zM679 451h1v1h-1zM680 451h1v1h-1zM681 451h1v1h-1zM682 450h1v1h-1zM683 450h1v1h-1zM684 450h1v1h-1zM685 450h1v1h-1zM686 450h1v1h-1zM687 450h1v1h-1zM688 449h1v1h-1zM689 449h1v1h-1zM690 449h1v1h-1zM691 449h1v1h-1zM692 449h1v1h-1zM693 448h1v1h-1zM694 448h1v1h-1zM695 448h1v1h-1zM696 448h1v1h-1zM697 448h1v1h-1zM698 448h1v1h-1zM699 447h1v1h-1zM700 447h1v1h-1zM701 447h1v1h-1zM702 447h1v1h-1zM703 447h1v1h-1zM704 447h1v1h-1zM705 446h1v1h-1zM706 446h1v1h-1zM707 446h1v1h-1zM708 446h1v1h-1zM709 446h1v1h-1zM710 446h1v1h-1zM711 445h1v1h-1zM712 445h1v1h-1zM713 445h1v1h-1zM714 445h1v1h-1zM715 445h1v1h-1zM716 445h1v1h-1zM717 445h1v1h-1zM718 444h1v1h-1zM719 444h1v1h-1zM720 444h1v1h-1zM721 444h1v1h-1zM722 444h1v1h-1zM723 444h1v1h-1zM724 443h1v1h-1zM725 443h1v1h-1zM726 443h1v1h-1zM727 443h1v1h-1zM728 443h1v1h-1zM729 443h1v1h-1zM730 443h1v1h-1zM731 442h1v1h-1zM732 442h1v1h-1zM733 442h1v1h-1zM734 442h1v1h-1zM735 442h1v1h-1zM736 442h1v1h-1zM737 442h1v1h-1zM738 441h1v1h-1zM739 441h1v1h-1zM740 441h1v1h-1zM741 441h1v1h-1zM742 441h1v1h-1zM743 441h1v1h-1zM744 441h1v1h-1zM745 441h1v1h-1zM746 440h1v1h-1zM747 440h1v1h-1zM748 440h1v1h-1zM749 440h1v1h-1zM750 440h1v1h-1zM751 440h1v1h-1zM752 440h1v1h-1zM753 439h1v1h-1z" fill="#0000ff"/><path d="M43 395h1v1h-1zM44 395h1v1h-1zM45 395h1v1h-1zM46 395h1v1h-1zM47 395h1v1h-1zM48 395h1v1h-1zM49 395h1v1h-1zM50 395h1v1h-1zM51 395h1v1h-1zM52 395h1v1h-1zM53 395h1v1h-1zM54 395h1v1h-1zM55 395h1v1h-1zM56 396h1v1h-1zM57 396h1v1h-1zM58 396h1v1h-1zM59 396h1v1h-1zM60 396h1v1h-1zM61 396h1v1h-1zM62 396h1v1h-1zM63 396h1v1h-1zM64 396h1v1h-1zM65 397h1v1h-1zM66 397h1v1h-1zM67 397h1v1h-1zM68 397h1v1h-1zM69 397h1v1h-1zM70 397h1v1h-1zM71 397h1v1h-1zM72 397h1v1h-1zM73 398h1v1h-1zM74 398h1v1h-1zM75 398h1v1h-1zM76 398h1v1h-1zM77 398h1v1h-1zM78 398h1v1h-1zM79 398h1v1h-1zM80 399h1v1h-1zM81 399h1v1h-1zM82 399h1v1h-1zM83 399h1v1h-1zM84 399h1v1h-1zM85 399h1v1h-1zM86 399h1v1h-1zM87 399h1v1h-1zM88 400h1v1h-1zM89 400h1v1h-1zM90 400h1v1h-1zM91 400h1v1h-1zM92 400h1v1h-1zM93 400h1v1h-1zM94 400h1v1h-1zM95 401h1v1h-1zM96 401h1v1h-1zM97 401h1v1h-1zM98 401h1v1h-1zM99 401h1v1h-1zM100 401h1v1h-1zM101 401h1v1h-1zM102 401h1v1h-1zM103 402h1v1h-1zM104 402h1v1h-1zM105 402h1v1h-1zM106 402h1v1h-1zM107 402h1v1h-1zM108 402h1v1h-1zM109 402h1v1h-1zM110 402h1v1h-1zM111 403h1v1h-1zM112 403h1v1h-1zM113 403h1v1h-1zM114 403h1v1h-1zM115 403h1v1h-1zM116 403h1v1h-1zM117 403h1v1h-1zM118 403h1v1h-1zM119 403h1v1h-1zM120 404h1v1h-1zM121 404h1v1h-1zM122 404h1v1h-1zM123 404h1v1h-1zM124 404h1v1h-1zM125 404h1v1h-1zM126 404h1v1h-1zM127 404h1v1h-1zM128 404h1v1h-1zM129 404h1v1h-1zM130 404h1v1h-1zM131 405h1v1h-1zM132 405h1v1h-1zM133 405h1v1h-1zM134 405h1v1h-1zM135 405h1v1h-1zM136 405h1v1h-1zM137 405h1v1h-1zM138 405h1v1h-1zM139 405h1v1h-1zM140 405h1v1h-1zM141 405h1v1h-1zM142 405h1v1h-1zM143 405h1v1h-1zM144 405h1v1h-1zM145 406h1v1h-1zM146 406h1v1h-1zM147 406h1v1h-1zM148 406h1v1h-1zM149 406h1v1h-1zM150 406h1v1h-1zM151 406h1v1h-1zM152 406h1v1h-1zM153 406h1v1h-1zM154 406h1v1h-1zM155 406h1v1h-1zM156 406h1v1h-1zM157 406h1v1h-1zM158 406h1v1h-1zM159 406h1v1h-1zM160 406h1v1h-1zM161 406h1v1h-1zM162 406h1v1h-1zM163 406h1v1h-1zM164 406h1v1h-1zM165 406h1v1h-1zM166 406h1v1h-1zM167 406h1v1h-1zM168 406h1v1h-1zM169 406h1v1h-1zM170 406h1v1h-1zM171 406h1v1h-1zM172 406h1v1h-1zM173 406h1v1h-1zM174 406h1v1h-1zM175 406h1v1h-1zM176 406h1v1h-1zM177 406h1v1h-1zM178 406h1v1h-1zM179 406h1v1h-1zM180 406h1v1h-1zM181 406h1v1h-1zM182 406h1v1h-1zM183 406h1v1h-1zM184 406h1v1h-1zM185 406h1v1h-1zM186 406h1v1h-1zM187 406h1v1h-1zM188 406h1v1h-1zM189 406h1v1h-1zM190 406h1v1h-1zM191 406h1v1h-1zM192 405h1v1h-1zM193 405h1v1h-1zM194 405h1v1h-1zM195 405h1v1h-1zM196 405h1v1h-1zM197 405h1v1h-1zM198 405h1v1h-1zM199 405h1v1h-1zM200 405h1v1h-1zM201 405h1v1h-1zM202 405h1v1h-1zM203 405h1v1h-1zM204 404h1v1h-1zM205 404h1v1h-1zM206 404h1v1h-1zM207 404h1v1h-1zM208 404h1v1h-1zM209 404h1v1h-1zM210 404h1v1h-1zM211 404h1v1h-1zM212 404h1v1h-1zM213 403h1v1h-1zM214 403h1v1h-1zM215 403h1v1h-1zM216 403h1v1h-1zM217 403h1v1h-1zM218 403h1v1h-1zM219 403h1v1h-1zM220 402h1v1h-1zM221 402h1v1h-1zM222 402h1v1h-1zM223 402h1v1h-1zM224 402h1v1h-1zM225 402h1v1h-1zM226 401h1v1h-1zM227 401h1v1h-1zM228 401h1v1h-1zM229 401h1v1h-1zM230 400h1v1h-1zM231 400h1v1h-1zM232 400h1v1h-1zM233 400h1v1h-1zM234 400h1v1h-1zM235 399h1v1h-1zM236 399h1v1h-1zM237 399h1v1h-1zM238 399h1v1h-1zM239 398h1v1h-1zM240 398h1v1h-1zM241 398h1v1h-1zM242 398h1v1h-1zM243 397h1v1h-1zM244 397h1v1h-1zM245 397h1v1h-1zM246 396h1v1h-1zM247 396h1v1h-1zM248 396h1v1h-1zM249 395h1v1h-1zM250 395h1v1h-1zM251 395h1v1h-1zM252 394h1v1h-1zM253 394h1v1h-1zM254 394h1v1h-1zM255 393h1v1h-1zM256 393h1v1h-1zM257 392h1v1h-1zM258 392h1v1h-1zM259 392h1v1h-1zM260 391h1v1h-1zM261 391h1v1h-1zM262 390h1v1h-1zM263 390h1v1h-1zM264 389h1v1h-1zM265 389h1v1h-1zM266 388h1v1h-1zM267 388h1v1h-1zM268 387h1v1h-1zM269 387h1v1h-1zM270 386h1v1h-1zM271 386h1v1h-1zM272 385h1v1h-1zM273 385h1v1h-1zM274 384h1v1h-1zM275 383h1v1h-1zM276 383h1v1h-1zM277 382h1v1h-1zM278 381h1v1h-1zM279 381h1v1h-1zM280 380h1v1h-1zM281 379h1v1h-1zM282 379h1v1h-1zM283 378h1v1h-1zM284 377h1v1h-1zM285 376h1v1h-1zM286 376h1v1h-1zM287 375h1v1h-1zM288 374h1v1h-1zM289 373h1v1h-1zM290 372h1v1h-1zM291 371h1v1h-1zM292 370h1v1h-1zM293 369h1v1h-1zM294 368h1v1h-1zM295 367h1v1h-1zM296 366h1v1h-1zM297 365h1v1h-1zM298 364h1v1h-1zM299 363h1v1h-1zM300 362h1v1h-1zM301 361h1v1h-1zM302 360h1v1h-1zM303 359h1v1h-1zM304 357h1v2h-1zM305 356h1v1h-1zM306 355h1v1h-1zM307 353h1v2h-1zM308 352h1v1h-1zM309 351h1v1h-1zM310 349h1v2h-1zM311 348h1v1h-1zM312 346h1v2h-1zM313 345h1v1h-1zM314 343h1v2h-1zM315 341h1v2h-1zM316 340h1v1h-1zM317 338h1v2h-1zM318 336h1v2h-1zM319 334h1v2h-1zM320 333h1v1h-1zM321 331h1v2h-1zM322 329h1v2h-1zM323 327h1v2h-1zM324 325h1v2h-1zM325 322h1v3h-1zM326 320h1v2h-1zM327 318h1v2h-1zM328 316h1v2h-1zM329 313h1v3h-1zM330 311h1v2h-1zM331 308h1v3h-1zM332 306h1v2h-1zM333 303h1v3h-1zM334 301h1v2h-1zM335 298h1v3h-1zM336 295h1v3h-1zM337 292h1v3h-1zM338 289h1v3h-1zM339 286h1v3h-1zM340 283h1v3h-1zM341 280h1v3h-1zM342 277h1v3h-1zM343 274h1v3h-1zM344 271h1v3h-1zM345 267h1v4h-1zM346 264h1v3h-1zM347 261h1v3h-1zM348 257h1v4h-1zM349 254h1v3h-1zM350 250h1v4h-1zM351 247h1v3h-1zM352 243h1v4h-1zM353 239h1v4h-1zM354 235h1v4h-1zM355 232h1v3h-1zM356 228h1v4h-1zM357 224h1v4h-1zM358 220h1v4h-1zM359 216h1v4h-1zM360 212h1v4h-1zM361 208h1v4h-1zM362 204h1v4h-1zM363 200h1v4h-1zM364 196h1v4h-1zM365 192h1v4h-1zM366 188h1v4h-1zM367 184h1v4h-1zM368 181h1v3h-1zM369 177h1v4h-1zM370 173h1v4h-1zM371 169h1v4h-1zM372 166h1v3h-1zM373 162h1v4h-1zM374 159h1v3h-1zM375 156h1v3h-1zM376 152h1v4h-1zM377 150h1v2h-1zM378 147h1v3h-1zM379 144h1v3h-1zM380 142h1v2h-1zM381 140h1v2h-1zM382 138h1v2h-1zM383 136h1v2h-1zM384 134h1v2h-1zM385 132h1v2h-1zM386 131h1v1h-1zM387 129h1v2h-1zM388 128h1v1h-1zM389 127h1v1h-1zM390 127h1v1h-1zM391 126h1v1h-1zM392 126h1v1h-1zM393 126h1v1h-1zM394 126h1v1h-1zM395 127h1v1h-1zM396 128h1v1h-1zM397 128h1v1h-1zM398 129h1v2h-1zM399 131h1v1h-1zM400 132h1v1h-1zM401 133h1v2h-1zM402 135h1v2h-1zM403 137h1v2h-1zM404 139h1v2h-1zM405 141h1v2h-1zM406 143h1v3h-1zM407 146h1v2h-1zM408 148h1v3h-1zM409 151h1v3h-1zM410 154h1v3h-1zM411 157h1v3h-1zM412 160h1v3h-1zM413 163h1v3h-1zM414 166h1v3h-1zM415 169h1v3h-1zM416 172h1v4h-1zM417 176h1v3h-1zM418 179h1v3h-1zM419 182h1v3h-1zM420 185h1v4h-1zM421 189h1v3h-1zM422 192h1v4h-1zM423 196h1v3h-1zM424 199h1v3h-1zM425 202h1v4h-1zM426 206h1v3h-1zM427 209h1v3h-1zM428 212h1v4h-1zM429 216h1v3h-1zM430 219h1v3h-1zM431 222h1v3h-1zM432 225h1v3h-1zM433 228h1v4h-1zM434 232h1v3h-1zM435 235h1v3h-1zM436 238h1v3h-1zM437 241h1v3h-1zM438 244h1v3h-1zM439 247h1v2h-1zM440 249h1v3h-1zM441 252h1v3h-1zM442 255h1v3h-1zM443 258h1v2h-1zM444 260h1v3h-1zM445 263h1v3h-1zM446 266h1v2h-1zM447 268h1v3h-1zM448 271h1v2h-1zM449 273h1v2h-1zM450 275h1v3h-1zM451 278h1v2h-1zM452 280h1v2h-1zM453 282h1v2h-1zM454 284h1v3h-1zM455 287h1v2h-1zM456 289h1v2h-1zM457 291h1v2h-1zM458 293h1v2h-1zM459 295h1v2h-1zM460 297h1v2h-1zM461 299h1v2h-1zM462 301h1v2h-1zM463 303h1v1h-1zM464 304h1v2h-1zM465 306h1v2h-1zM466 308h1v2h-1zM467 310h1v1h-1zM468 311h1v2h-1zM469 313h1v2h-1zM470 315h1v1h-1zM471 316h1v2h-1zM472 318h1v1h-1zM473 319h1v2h-1zM474 321h1v1h-1zM475 322h1v2h-1zM476 324h1v1h-1zM477 325h1v1h-1zM478 326h1v2h-1zM479 328h1v1h-1zM480 329h1v1h-1zM481 330h1v2h-1zM482 332h1v1h-1zM483 333h1v1h-1zM484 334h1v1h-1zM485 335h1v1h-1zM486 336h1v2h-1zM487 338h1v1h-1zM488 339h1v1h-1zM489 340h1v1h-1zM490 341h1v1h-1zM491 342h1v1h-1zM492 343h1v1h-1zM493 344h1v1h-1zM494 345h1v1h-1zM495 346h1v1h-1zM496 347h1v1h-1zM497 348h1v1h-1zM498 349h1v1h-1zM499 349h1v1h-1zM500 350h1v1h-1zM501 351h1v1h-1zM502 352h1v1h-1zM503 353h1v1h-1zM504 354h1v1h-1zM505 354h1v1h-1zM506 355h1v1h-1zM507 356h1v1h-1zM508 357h1v1h-1zM509 357h1v1h-1zM510 358h1v1h-1zM511 359h1v1h-1zM512 359h1v1h-1zM513 360h1v1h-1zM514 361h1v1h-1zM515 361h1v1h-1zM516 362h1v1h-1zM517 363h1v1h-1zM518 363h1v1h-1zM519 364h1v1h-1zM520 365h1v1h-1zM521 365h1v1h-1zM522 366h1v1h-1zM523 366h1v1h-1zM524 367h1v1h-1zM525 367h1v1h-1zM526 368h1v1h-1zM527 368h1v1h-1zM528 369h1v1h-1zM529 369h1v1h-1zM530 370h1v1h-1zM531 370h1v1h-1zM532 371h1v1h-1zM533 371h1v1h-1zM534 372h1v1h-1zM535 372h1v1h-1zM536 373h1v1h-1zM537 373h1v1h-1zM538 374h1v1h-1zM539 374h1v1h-1zM540 375h1v1h-1zM541 375h1v1h-1zM542 375h1v1h-1zM543 376h1v1h-1zM544 376h1v1h-1zM545 377h1v1h-1zM546 377h1v1h-1zM547 377h1v1h-1zM548 378h1v1h-1zM549 378h1v1h-1zM550 378h1v1h-1zM551 379h1v1h-1zM552 379h1v1h-1zM553 379h1v1h-1zM554 380h1v1h-1zM555 380h1v1h-1zM556 380h1v1h-1zM557 381h1v1h-1zM558 381h1v1h-1zM559 381h1v1h-1zM560 382h1v1h-1zM561 382h1v1h-1zM562 382h1v1h-1zM563 383h1v1h-1zM564 383h1v1h-1zM565 383h1v1h-1zM566 384h1v1h-1zM567 384h1v1h-1zM568 384h1v1h-1zM569 384h1v1h-1zM570 385h1v1h-1zM571 385h1v1h-1zM572 385h1v1h-1zM573 385h1v1h-1zM574 386h1v1h-1zM575 386h1v1h-1zM576 386h1v1h-1zM577 386h1v1h-1zM578 387h1v1h-1zM579 387h1v1h-1zM580 387h1v1h-1zM581 387h1v1h-1zM582 388h1v1h-1zM583 388h1v1h-1zM584 388h1v1h-1zM585 388h1v1h-1zM586 388h1v1h-1zM587 389h1v1h-1zM588 389h1v1h-1zM589 389h1v1h-1zM590 389h1v1h-1zM591 389h1v1h-1zM592 390h1v1h-1zM593 390h1v1h-1zM594 390h1v1h-1zM595 390h1v1h-1zM596 390h1v1h-1zM597 391h1v1h-1zM598 391h1v1h-1zM599 391h1v1h-1zM600 391h1v1h-1zM601 391h1v1h-1zM602 391h1v1h-1zM603 392h1v1h-1zM604 392h1v1h-1zM605 392h1v1h-1zM606 392h1v1h-1zM607 392h1v1h-1zM608 392h1v1h-1zM609 393h1v1h-1zM610 393h1v1h-1zM611 393h1v1h-1zM612 393h1v1h-1zM613 393h1v1h-1zM614 393h1v1h-1zM615 394h1v1h-1zM616 394h1v1h-1zM617 394h1v1h-1zM618 394h1v1h-1zM619 394h1v1h-1zM620 394h1v1h-1zM621 394h1v1h-1zM622 395h1v1h-1zM623 395h1v1h-1zM624 395h1v1h-1zM625 395h1v1h-1zM626 395h1v1h-1zM627 395h1v1h-1zM628 395h1v1h-1zM629 395h1v1h-1zM630 396h1v1h-1zM631 396h1v1h-1zM632 396h1v1h-1zM633 396h1v1h-1zM634 396h1v1h-1zM635 396h1v1h-1zM636 396h1v1h-1zM637 396h1v1h-1zM638 396h1v1h-1zM639 397h1v1h-1zM640 397h1v1h-1zM641 397h1v1h-1zM642 397h1v1h-1zM643 397h1v1h-1zM644 397h1v1h-1zM645 397h1v1h-1zM646 397h1v1h-1zM647 397h1v1h-1zM648 398h1v1h-1zM649 398h1v1h-1zM650 398h1v1h-1zM651 398h1v1h-1zM652 398h1v1h-1zM653 398h1v1h-1zM654 398h1v1h-1zM655 398h1v1h-1zM656 398h1v1h-1zM657 398h1v1h-1zM658 398h1v1h-1zM659 399h1v1h-1zM660 399h1v1h-1zM661 399h1v1h-1zM662 399h1v1h-1zM663 399h1v1h-1zM664 399h1v1h-1zM665 399h1v1h-1zM666 399h1v1h-1zM667 399h1v1h-1zM668 399h1v1h-1zM669 399h1v1h-1zM670 399h1v1h-1zM671 400h1v1h-1zM672 400h1v1h-1zM673 400h1v1h-1zM674 400h1v1h-1zM675 400h1v1h-1zM676 400h1v1h-1zM677 400h1v1h-1zM678 400h1v1h-1zM679 400h1v1h-1zM680 400h1v1h-1zM681 400h1v1h-1zM682 400h1v1h-1zM683 400h1v1h-1zM684 400h1v1h-1zM685 401h1v1h-1zM686 401h1v1h-1zM687 401h1v1h-1zM688 401h1v1h-1zM689 401h1v1h-1zM690 401h1v1h-1zM691 401h1v1h-1zM692 401h1v1h-1zM693 401h1v1h-1zM694 401h1v1h-1zM695 401h1v1h-1zM696 401h1v1h-1zM697 401h1v1h-1zM698 401h1v1h-1zM699 401h1v1h-1zM700 401h1v1h-1zM701 401h1v1h-1zM702 402h1v1h-1zM703 402h1v1h-1zM704 402h1v1h-1zM705 402h1v1h-1zM706 402h1v1h-1zM707 402h1v1h-1zM708 402h1v1h-1zM709 402h1v1h-1zM710 402h1v1h-1zM711 402h1v1h-1zM712 402h1v1h-1zM713 402h1v1h-1zM714 402h1v1h-1zM715 402h1v1h-1zM716 402h1v1h-1zM717 402h1v1h-1zM718 402h1v1h-1zM719 402h1v1h-1zM720 402h1v1h-1zM721 402h1v1h-1zM722 403h1v1h-1zM723 403h1v1h-1zM724 403h1v1h-1zM725 403h1v1h-1zM726 403h1v1h-1zM727 403h1v1h-1zM728 403h1v1h-1zM729 403h1v1h-1zM730 403h1v1h-1zM731 403h1v1h-1zM732 403h1v1h-1zM733 403h1v1h-1zM734 403h1v1h-1zM735 403h1v1h-1zM736 403h1v1h-1zM737 403h1v1h-1zM738 403h1v1h-1zM739 403h1v1h-1zM740 403h1v1h-1zM741 403h1v1h-1zM742 403h1v1h-1zM743 403h1v1h-1zM744 403h1v1h-1zM745 403h1v1h-1zM746 403h1v1h-1zM747 404h1v1h-1zM748 404h1v1h-1zM749 404h1v1h-1zM750 404h1v1h-1zM751 404h1v1h-1zM752 404h1v1h-1zM753 404h1v1h-1z" fill="#008000"/></svg>

  <div id="clip">
    <div class="fl" style="left:36px;top:14px;color:#ff0000">f1:</div>
    <div class="fl" style="left:59px;top:14px;color:#ff0000">x -&gt;</div>
    <div class="fl" style="left:86px;top:14px;color:#ff0000">(((((2*3,14159265358979*x*10E-3/(1-(2*3,14159265358979*x)^2*10E-3*100E-9))*(2*3,14159265358979*x*10E-3/(1-(2*3,14159265358979*x)^2*10E-3*100E-9))</div>
    <div class="fl" style="left:36px;top:31px;color:#0000ff">f2:</div>
    <div class="fl" style="left:59px;top:31px;color:#0000ff">x -&gt;</div>
    <div class="fl" style="left:86px;top:31px;color:#0000ff">(2*3,14159265358979*x*1200*10E-3/(1-(2*3,14159265358979*x)^2*10E-3*100E-9))/(1200^2+(2*3,14159265358979*x*10E-3/(1-(2*3,14159265358979*x)^2*10E-3*100E-9))</div>
    <div class="fl" style="left:36px;top:48px;color:#008000">f3:</div>
    <div class="fl" style="left:59px;top:48px;color:#008000">x -&gt;</div>
    <div class="fl" style="left:86px;top:48px;color:#008000">((2*3,14159265358979*x*10E-3/(1-(2*3,14159265358979*x)^2*10E-3*100E-9))*(2*3,14159265358979*x*10E-3/(1-(2*3,14159265358979*x)^2*10E-3*100E-9))</div>
  </div>

  <!-- bottom panel -->
  <div class="abs" style="left:5px;top:568px;width:772px;height:46px;background:#f0f0f0;border-top:1px solid #a0a0a0;border-left:1px solid #a0a0a0"></div>

  <div class="pn" style="left:14px;top:570px;font:italic bold 13px/16px 'Liberation Sans',sans-serif;color:#008000;letter-spacing:0.68px">Wertebereich:</div>
  <div class="pn" style="left:11px;top:591px;font:italic bold 13.5px/16px 'Liberation Sans',sans-serif;color:#000080">Ymin:</div>
  <div class="ed" style="left:50px;top:588px;width:58px;height:23px"></div>
  <div class="pn" style="left:52px;top:591px;font:bold 13px/16px 'Liberation Sans',sans-serif;color:#800000;letter-spacing:1px">-0,55</div>
  <div class="pn" style="left:116px;top:591px;font:italic bold 13.5px/16px 'Liberation Sans',sans-serif;color:#000080">Ymax:</div>
  <div class="ed" style="left:166px;top:588px;width:58px;height:23px"></div>
  <div class="pn" style="left:168px;top:591px;font:bold 13px/16px 'Liberation Sans',sans-serif;color:#800000;letter-spacing:0.9px">1,25</div>

  <div class="cb" style="left:242px;top:580px"></div>
  <div class="cb" style="left:242px;top:597px"></div>
  <div class="pn" style="left:258px;top:580px;font:bold 12px/15px 'Liberation Sans',sans-serif;color:#000">Maßstab 1:1</div>
  <div class="pn" style="left:258px;top:597px;font:bold 12px/15px 'Liberation Sans',sans-serif;color:#000">Asymptote</div>

  <div class="sep" style="left:336px"></div>

  <div class="btn" style="left:348px;top:579px;width:32px;height:27px"></div>
  <svg class="abs" style="left:356px;top:585px" width="16" height="16" viewBox="0 0 16 16" shape-rendering="crispEdges">
    <path d="M3.5 0.5H8.5L12.5 4.5V8.5H3.5Z" fill="#fff" stroke="#000"/>
    <rect x="9" y="2" width="2" height="2" fill="#fff"/><rect x="9" y="3" width="1" height="1" fill="#000"/>
    <rect x="5" y="2" width="1" height="1" fill="#000"/><rect x="5" y="4" width="2" height="1" fill="#000"/>
    <rect x="5" y="6" width="4" height="1" fill="#000"/><rect x="10" y="6" width="1" height="1" fill="#000"/>
    <rect x="0" y="8" width="16" height="7" fill="#000"/>
    <rect x="1" y="9" width="14" height="3" fill="#f4f4f4"/>
    <rect x="2" y="10" width="1" height="1" fill="#cfcfcf"/><rect x="4" y="10" width="1" height="1" fill="#cfcfcf"/><rect x="6" y="10" width="1" height="1" fill="#cfcfcf"/><rect x="8" y="10" width="1" height="1" fill="#cfcfcf"/><rect x="10" y="10" width="1" height="1" fill="#cfcfcf"/>
    <rect x="13" y="10" width="1" height="1" fill="#ff0000"/>
    <rect x="1" y="13" width="14" height="2" fill="#d0d0d0"/>
    <rect x="1" y="15" width="14" height="1" fill="#000"/>
  </svg>
  <div class="btn" style="left:388px;top:586px;width:20px;height:20px"></div>
  <svg class="abs" style="left:390px;top:587px" width="17" height="17" viewBox="0 0 17 17" shape-rendering="crispEdges">
    <path d="M4.5 1.5H10.5L13.5 4.5V9.5H4.5Z" fill="#fff" stroke="#000"/>
    <path d="M1 3H3V2H5V1H10V3H9V5H7V7H4V5H1Z" fill="#000"/>
    <rect x="2" y="5" width="1" height="1" fill="#fff"/>
    <rect x="0" y="9" width="16" height="8" fill="#000"/>
    <rect x="1" y="10" width="14" height="2" fill="#f4f4f4"/>
    <rect x="2" y="10" width="1" height="2" fill="#ff0000"/>
    <rect x="1" y="13" width="13" height="2" fill="#d0d0d0"/>
    <rect x="0" y="16" width="1" height="1" fill="#fff"/>
    <path d="M4 0.5L16 15" stroke="#808000" stroke-width="2.2" shape-rendering="auto"/>
  </svg>

  <div class="sep" style="left:412px"></div>

  <div class="btn" style="left:421px;top:579px;width:32px;height:27px"></div>
  <svg class="abs" style="left:428px;top:585px" width="18" height="18" viewBox="0 0 18 18" shape-rendering="crispEdges">
    <path d="M5.5 0.5H13L16.5 4V16.5H5.5Z" fill="#fff" stroke="#000"/>
    <rect x="14" y="2" width="1" height="2" fill="#fff"/><rect x="13" y="1" width="1" height="3" fill="#000"/><rect x="13" y="3" width="3" height="1" fill="#000"/>
        <path d="M1.5 1H5.5L1.5 5.5Z" fill="#00ffff"/>
    <ellipse cx="6.3" cy="6" rx="4.6" ry="4.4" fill="#ffff00" stroke="#000" stroke-width="1" shape-rendering="auto"/>
    <path d="M6 3L11 8M8 2.5L12.5 7" stroke="#000" stroke-width="1.2" shape-rendering="auto"/>
    <path d="M7 2.5L11.5 7" stroke="#ffff00" stroke-width="1" shape-rendering="auto"/>
    <rect x="3" y="4" width="1" height="1" fill="#fff"/><rect x="5" y="6" width="1" height="1" fill="#fff"/><rect x="3" y="8" width="1" height="1" fill="#fff"/><rect x="6" y="8" width="1" height="1" fill="#fff"/>
    <rect x="7" y="12" width="2" height="1" fill="#000"/><rect x="10" y="12" width="2" height="1" fill="#000"/><rect x="13" y="12" width="2" height="1" fill="#000"/>
    <rect x="7" y="14" width="2" height="1" fill="#000"/><rect x="10" y="14" width="1" height="1" fill="#000"/><rect x="13" y="14" width="2" height="1" fill="#000"/>
    <rect x="14" y="8" width="1" height="1" fill="#000"/><rect x="14" y="10" width="1" height="1" fill="#000"/>
  </svg>

  <div class="circ" style="left:465px;top:578px;background:#ff0000"></div>
  <div class="circ" style="left:465px;top:595px;background:#0000ff"></div>
  <div class="cbc" style="left:483px;top:578px"><svg width="13" height="13" viewBox="0 0 13 13" style="position:absolute;left:0;top:0"><path d="M3.2 6.6L5.5 8.8L9.9 4.3" stroke="#e8f0fa" stroke-width="1" fill="none"/></svg></div>
  <div class="cbc" style="left:483px;top:596px"><svg width="13" height="13" viewBox="0 0 13 13" style="position:absolute;left:0;top:0"><path d="M3.2 6.6L5.5 8.8L9.9 4.3" stroke="#e8f0fa" stroke-width="1" fill="none"/></svg></div>
  <div class="pn" style="left:499px;top:578px;font:bold 11.5px/15px 'Liberation Sans',sans-serif;color:#000">Funkt.: 1</div>
  <div class="pn" style="left:499px;top:596px;font:bold 11.5px/15px 'Liberation Sans',sans-serif;color:#000">Funkt.: 2</div>

  <div class="circ" style="left:562px;top:578px;background:#008000"></div>
  <div class="circ" style="left:562px;top:595px;background:#ff00ff"></div>
  <div class="cbc" style="left:580px;top:578px"><svg width="13" height="13" viewBox="0 0 13 13" style="position:absolute;left:0;top:0"><path d="M3.2 6.6L5.5 8.8L9.9 4.3" stroke="#e8f0fa" stroke-width="1" fill="none"/></svg></div>
  <div class="cbc" style="left:580px;top:596px"><svg width="13" height="13" viewBox="0 0 13 13" style="position:absolute;left:0;top:0"><path d="M3.2 6.6L5.5 8.8L9.9 4.3" stroke="#e8f0fa" stroke-width="1" fill="none"/></svg></div>
  <div class="pn" style="left:596px;top:578px;font:bold 11.5px/15px 'Liberation Sans',sans-serif;color:#000">Funkt.: 3</div>
  <div class="pn" style="left:596px;top:596px;font:bold 11.5px/15px 'Liberation Sans',sans-serif;color:#000">Funkt.: 4</div>

  <div class="sep" style="left:659px"></div>

  <div class="btn" style="left:669px;top:579px;width:62px;height:27px"></div>
  <div class="pn" style="left:674px;top:586px;font:bold 11.3px/15px 'Liberation Sans',sans-serif;color:#800000">Close</div>
  <svg class="abs" style="left:700px;top:580px" width="30" height="26" viewBox="700 580 30 26" shape-rendering="crispEdges">
    <path d="M708 585L723.5 592.5L712 592.5Z" fill="#0000ff"/>
    <path d="M712 592.5L723.5 592.5L708 600Z" fill="#000080"/>
    <rect x="708" y="592" width="16" height="1" fill="#ff0000"/>
  </svg>

  <div class="btn" style="left:739px;top:579px;width:27px;height:27px"></div>
  <div class="abs" style="left:742px;top:582px;width:22px;height:21px;background:#e0e0e0"></div>
  <svg class="abs" style="left:742px;top:582px" width="22" height="22" viewBox="0 0 22 22"><g fill="#000080" stroke="#000080" stroke-width="2.1"><path d="M0.30 0.80L9.30 2.60L4.30 4.80L2.10 9.80Z" stroke="none"/><path d="M3.30 3.80L8.60 9.10" fill="none"/><path d="M21.70 0.80L12.70 2.60L17.70 4.80L19.90 9.80Z" stroke="none"/><path d="M18.70 3.80L13.40 9.10" fill="none"/><path d="M0.30 21.20L9.30 19.40L4.30 17.20L2.10 12.20Z" stroke="none"/><path d="M3.30 18.20L8.60 12.90" fill="none"/><path d="M21.70 21.20L12.70 19.40L17.70 17.20L19.90 12.20Z" stroke="none"/><path d="M18.70 18.20L13.40 12.90" fill="none"/></g></svg>
</div>
<div id="topline"></div>
</body></html>
